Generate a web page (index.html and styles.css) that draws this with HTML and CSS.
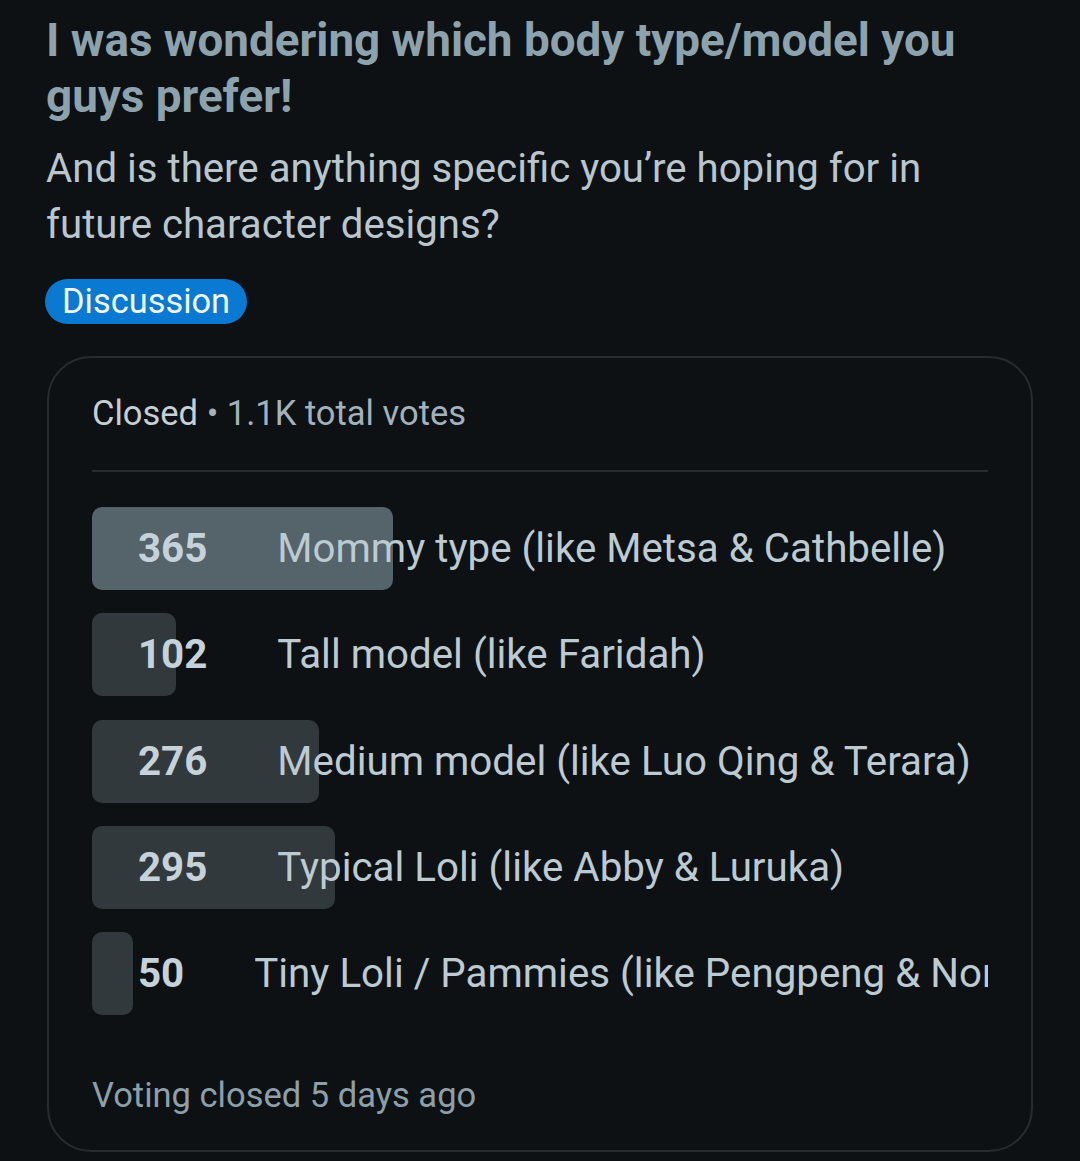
FILE: index.html
```html
<!DOCTYPE html>
<html lang="en">
<head>
<meta charset="utf-8">
<link rel="stylesheet" href="styles.css">
</head>
<body>
<div class="post">
  <h1 class="title">I was wondering which body type/model you guys prefer!</h1>
  <p class="body">And is there anything specific you’re hoping for in future character designs?</p>
  <span class="flair">Discussion</span>
  <div class="poll">
    <div class="poll-head"><span class="closed">Closed</span> <span class="meta">• 1.1K total votes</span></div>
    <div class="divider"></div>
    <div class="options">
      <div class="option winner"><div class="bar" style="width:301px"></div><span class="count">365</span><span class="label">Mommy type (like Metsa &amp; Cathbelle)</span></div>
      <div class="option"><div class="bar" style="width:84px"></div><span class="count">102</span><span class="label">Tall model (like Faridah)</span></div>
      <div class="option"><div class="bar" style="width:227px"></div><span class="count">276</span><span class="label">Medium model (like Luo Qing &amp; Terara)</span></div>
      <div class="option"><div class="bar" style="width:243px"></div><span class="count">295</span><span class="label">Typical Loli (like Abby &amp; Luruka)</span></div>
      <div class="option"><div class="bar" style="width:41px"></div><span class="count">50</span><span class="label">Tiny Loli / Pammies (like Pengpeng &amp; Nora)</span></div>
    </div>
    <div class="footer">Voting closed 5 days ago</div>
  </div>
</div>
</body>
</html>
```
FILE: styles.css
```css
html, body {
  margin: 0;
  padding: 0;
  background: #0e1113;
}
body {
  font-family: Roboto, "Noto Sans", "Liberation Sans", sans-serif;
}
.post {
  padding: 13px 47px 0 46px;
}
.title {
  margin: 0;
  font-size: 45.8px;
  line-height: 56px;
  font-weight: 700;
  color: #8ca2ad;
}
.body {
  margin: 16px 0 0;
  font-size: 40.2px;
  line-height: 56px;
  color: #b9c6cd;
}
.flair {
  display: inline-block;
  margin: 26px 0 0 -1px;
  padding: 0 17px;
  height: 45px;
  line-height: 45px;
  border-radius: 23px;
  background: #0a79d2;
  color: #f2f6f9;
  font-size: 34.4px;
}
.poll {
  margin-top: 32px;
  margin-left: 1px;
  border: 2px solid #262c30;
  border-radius: 44px;
  padding: 31px 43px 31px 43px;
}
.poll-head {
  font-size: 34.5px;
  line-height: 48px;
}
.closed { color: #c6cfd4; }
.meta { color: #a3b2ba; }
.divider {
  margin-top: 33px;
  height: 2px;
  background: #262c30;
}
.options {
  margin-top: 35px;
  display: flex;
  flex-direction: column;
  gap: 23.3px;
}
.option {
  position: relative;
  height: 83px;
  display: flex;
  align-items: center;
  white-space: nowrap;
  overflow: hidden;
  font-size: 40.3px;
  padding-left: 46px;
}
.bar {
  position: absolute;
  left: 0;
  top: 0;
  bottom: 0;
  border-radius: 10px;
  background: #32393d;
}
.winner .bar { background: #55636a; }
.count {
  position: relative;
  font-weight: 700;
  color: #c5d2d9;
}
.label {
  position: relative;
  margin-left: 70px;
  color: #bccad1;
}
.footer {
  margin-top: 56px;
  font-size: 34.5px;
  line-height: 48px;
  color: #8d9fa8;
}
```
